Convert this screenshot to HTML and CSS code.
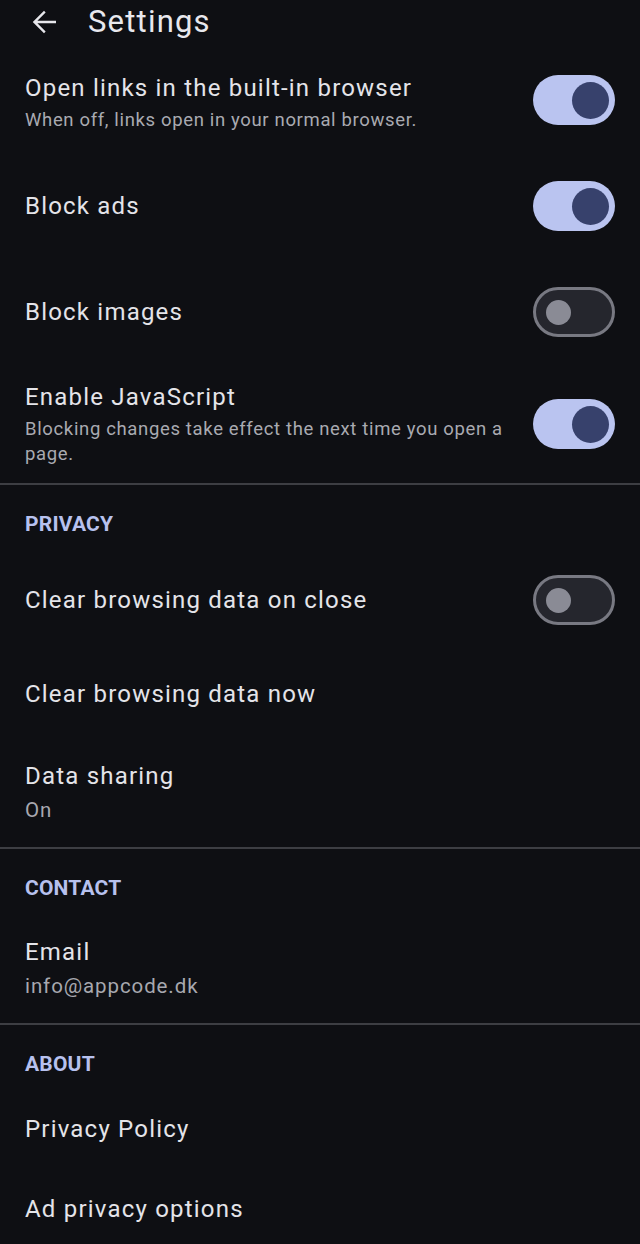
FILE: index.html
```html
<!DOCTYPE html>
<html lang="en">
<head>
<meta charset="utf-8">
<title>Settings</title>
<link rel="stylesheet" href="styles.css">
</head>
<body>
<div class="screen">
  <header class="appbar">
    <svg class="back" viewBox="0 0 24 24" width="36" height="36" aria-hidden="true">
      <path d="M20 11.1H7.6l5.5-5.5L12 4.5 4.5 12l7.5 7.5 1.1-1.1-5.5-5.5H20z" fill="#e6e6eb"/>
    </svg>
    <h1 class="appbar-title">Settings</h1>
  </header>

  <section class="group">
    <div class="row row-toggle">
      <div class="text text-offset">
        <div class="title">Open links in the built-in browser</div>
        <div class="summary">When off, links open in your normal browser.</div>
      </div>
      <span class="switch on"><span class="thumb"></span></span>
    </div>
    <div class="row row-toggle">
      <div class="text"><div class="title">Block ads</div></div>
      <span class="switch on"><span class="thumb"></span></span>
    </div>
    <div class="row row-toggle">
      <div class="text"><div class="title">Block images</div></div>
      <span class="switch off"><span class="thumb"></span></span>
    </div>
    <div class="row row-multi">
      <div class="text">
        <div class="title">Enable JavaScript</div>
        <div class="summary">Blocking changes take effect the next time you open a page.</div>
      </div>
      <span class="switch on"><span class="thumb"></span></span>
    </div>
  </section>

  <div class="divider"></div>

  <section class="group">
    <div class="category">PRIVACY</div>
    <div class="row row-first">
      <div class="text"><div class="title">Clear browsing data on close</div></div>
      <span class="switch off"><span class="thumb"></span></span>
    </div>
    <div class="row row-single">
      <div class="text"><div class="title">Clear browsing data now</div></div>
    </div>
    <div class="row row-value">
      <div class="text">
        <div class="title">Data sharing</div>
        <div class="value">On</div>
      </div>
    </div>
  </section>

  <div class="divider"></div>

  <section class="group">
    <div class="category">CONTACT</div>
    <div class="row row-value">
      <div class="text">
        <div class="title">Email</div>
        <div class="value">info@appcode.dk</div>
      </div>
    </div>
  </section>

  <div class="divider"></div>

  <section class="group">
    <div class="category category-tight">ABOUT</div>
    <div class="row row-about">
      <div class="text"><div class="title">Privacy Policy</div></div>
    </div>
    <div class="row row-about">
      <div class="text"><div class="title">Ad privacy options</div></div>
    </div>
  </section>
</div>
</body>
</html>
```

FILE: styles.css
```css
html, body {
  margin: 0;
  padding: 0;
  background: #0e0f13;
}

body {
  font-family: Roboto, "Noto Sans", "Liberation Sans", sans-serif;
  color: #e4e4e9;
}

.screen {
  width: 640px;
  height: 1244px;
  overflow: hidden;
  background: #0e0f13;
}

.appbar {
  height: 47px;
  box-sizing: border-box;
  padding: 0 0 3px 26px;
  display: flex;
  align-items: center;
}

.back {
  display: block;
  flex: none;
}

.appbar-title {
  margin: 0 0 0 26px;
  font-size: 31px;
  font-weight: 400;
  letter-spacing: 1.2px;
  line-height: 40px;
  color: #e8e8ed;
}

.group {
  display: flex;
  flex-direction: column;
}

.row {
  display: flex;
  align-items: center;
  justify-content: space-between;
  padding: 0 25px;
  box-sizing: border-box;
}

.row-toggle {
  min-height: 106px;
}

.row-multi {
  padding-top: 16px;
  padding-bottom: 16px;
}

.row-first {
  min-height: 96px;
}

.row-single {
  min-height: 92px;
}

.row-value {
  padding-top: 20px;
  padding-bottom: 23px;
}

.row-about {
  min-height: 80px;
}

.text {
  flex: 1;
  min-width: 0;
  padding-right: 30px;
}

.text-offset {
  padding-top: 5px;
}

.title {
  font-size: 24px;
  line-height: 32px;
  letter-spacing: 1.2px;
  color: #e4e4e9;
}

.summary {
  margin-top: 4px;
  font-size: 18.5px;
  line-height: 25px;
  letter-spacing: 0.65px;
  color: #a9aab1;
}

.value {
  margin-top: 4px;
  font-size: 20.5px;
  line-height: 28px;
  letter-spacing: 0.9px;
  color: #a7a8af;
}

.category {
  padding: 25px 25px 14px;
  font-size: 21px;
  line-height: 28px;
  font-weight: 700;
  letter-spacing: 0.2px;
  color: #b7c1ee;
}

.category-tight {
  padding-bottom: 11px;
}

.divider {
  height: 2px;
  background: #3d3e43;
}

.switch {
  flex: none;
  width: 82px;
  height: 50px;
  box-sizing: border-box;
  border-radius: 25px;
  display: flex;
  align-items: center;
}

.switch.on {
  background: #bac4f0;
  justify-content: flex-end;
  padding-right: 6px;
}

.switch.on .thumb {
  width: 37px;
  height: 37px;
  border-radius: 50%;
  background: #37416c;
}

.switch.off {
  background: #25262d;
  border: 3px solid #787982;
  justify-content: flex-start;
  padding-left: 10px;
}

.switch.off .thumb {
  width: 25px;
  height: 25px;
  border-radius: 50%;
  background: #8a8b95;
}
```
